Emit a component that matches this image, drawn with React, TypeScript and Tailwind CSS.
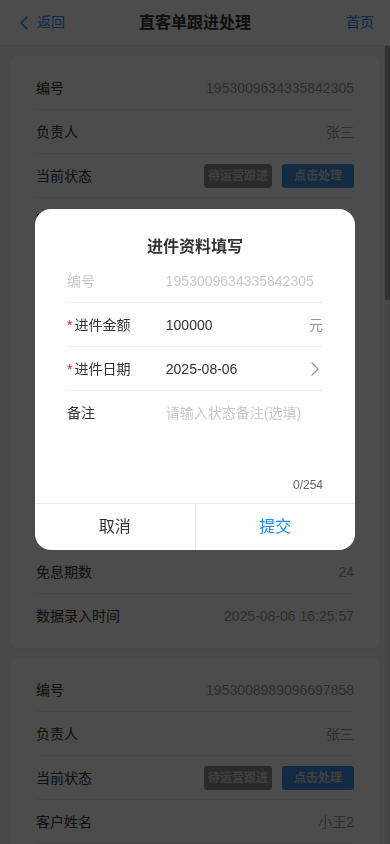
import React from "react";
import { ChevronLeft, ChevronRight } from "lucide-react";

type Row = { label: string; value?: string; status?: boolean };

const card1: Row[] = [
  { label: "编号", value: "1953009634335842305" },
  { label: "负责人", value: "张三" },
  { label: "当前状态", status: true },
  { label: "客户姓名", value: "小王1" },
  { label: "联系电话", value: "13800000000" },
  { label: "身份证号", value: "110101199001011234" },
  { label: "车辆品牌", value: "大众" },
  { label: "车辆型号", value: "朗逸" },
  { label: "车价", value: "120000" },
  { label: "贷款金额", value: "100000" },
  { label: "贷款期数", value: "36" },
  { label: "免息期数", value: "24" },
  { label: "数据录入时间", value: "2025-08-06 16:25:57" },
];

const card2: Row[] = [
  { label: "编号", value: "1953008989096697858" },
  { label: "负责人", value: "张三" },
  { label: "当前状态", status: true },
  { label: "客户姓名", value: "小王2" },
  { label: "联系电话", value: "13900000000" },
];

function Card({ rows }: { rows: Row[] }) {
  return (
    <div className="bg-white rounded-lg shadow-[0_1px_4px_rgba(0,0,0,0.06)] py-[10px] px-[10px]">
      {rows.map((r, i) => (
        <div
          key={i}
          className={
            "mx-4 h-[44px] flex items-center justify-between text-[14px] leading-6 " +
            (i < rows.length - 1 ? "border-b border-[#ebedf0]" : "")
          }
        >
          <span className="text-[#323233]">{r.label}</span>
          {r.status ? (
            <div className="flex items-center gap-[10px]">
              <span className="h-[24px] px-1 flex items-center rounded-[3px] bg-[#8e8e8e] text-[#d8d8d8] text-[12px] font-bold">
                待运营跟进
              </span>
              <span className="h-[24px] px-3 flex items-center rounded-[3px] bg-[#3d8fdc] text-[#d8d8d8] text-[12px] font-bold">
                点击处理
              </span>
            </div>
          ) : (
            <span className="text-[#969799]">{r.value}</span>
          )}
        </div>
      ))}
    </div>
  );
}

export default function App() {
  return (
    <div
      className="relative h-[844px] w-[390px] overflow-hidden bg-[#f5f5f5]"
      style={{ fontFamily: '"Liberation Sans", "Noto Sans CJK SC", sans-serif' }}
    >
      <header className="h-[46px] bg-white border-b border-[#ebedf0] grid grid-cols-[1fr_auto_1fr] items-center px-4">
        <div className="flex items-center text-[#1989fa] text-[14px]">
          <ChevronLeft size={24} strokeWidth={1.6} className="-ml-[4px] mr-[1px]" />
          <span>返回</span>
        </div>
        <div className="text-[16px] font-bold text-[#323233]">直客单跟进处理</div>
        <div className="text-right text-[#1989fa] text-[14px]">首页</div>
      </header>

      <main className="px-[10px] pt-[10px] flex flex-col gap-[10px]">
        <Card rows={card1} />
        <Card rows={card2} />
      </main>

      {/* scrollbar */}
      <div className="absolute right-0 top-[46px] bottom-0 w-[5px] bg-[#ececec]">
        <div className="h-[254px] w-full bg-[#a9a9a9]" />
      </div>

      {/* overlay */}
      <div className="fixed inset-0 bg-black/70" />

      {/* dialog */}
      <div className="fixed left-1/2 top-[209px] -translate-x-1/2 w-[320px] bg-white rounded-2xl overflow-hidden">
        <div className="pt-[26px] text-center text-[16px] leading-6 font-bold text-[#323233]">
          进件资料填写
        </div>
        <div className="mx-8 text-[14px] leading-6">
          <div className="h-[44px] flex items-center border-b border-[#ebedf0]">
            <span className="w-[86.8px] mr-3 shrink-0 text-[#c8c9cc]">编号</span>
            <span className="flex-1 text-[#c8c9cc]">1953009634335842305</span>
          </div>
          <div className="h-[44px] flex items-center border-b border-[#ebedf0]">
            <span className="w-[86.8px] mr-3 shrink-0 text-[#323233]">
              <span className="text-[#ee0a24] mr-[2px]">*</span>进件金额
            </span>
            <span className="flex-1 text-[#323233]">100000</span>
            <span className="text-[#969799] ml-1">元</span>
          </div>
          <div className="h-[44px] flex items-center border-b border-[#ebedf0]">
            <span className="w-[86.8px] mr-3 shrink-0 text-[#323233]">
              <span className="text-[#ee0a24] mr-[2px]">*</span>进件日期
            </span>
            <span className="flex-1 text-[#323233]">2025-08-06</span>
            <span className="ml-1 h-6 w-4 flex items-center justify-center text-[#969799]">
              <ChevronRight size={24} strokeWidth={1.3} className="shrink-0" />
            </span>
          </div>
          <div className="pt-[10px] pb-[10px] flex">
            <span className="w-[86.8px] mr-3 shrink-0 text-[#323233]">备注</span>
            <div className="flex-1 flex flex-col">
              <div className="h-[72px] text-[#c8c9cc]">请输入状态备注(选填)</div>
              <div className="mt-1 text-right text-[12px] leading-4 text-[#646566]">0/254</div>
            </div>
          </div>
        </div>
        <div className="flex h-[47px] border-t border-[#ebedf0] text-[16px]">
          <button className="flex-1 flex items-center justify-center text-[#323233]">取消</button>
          <button className="flex-1 flex items-center justify-center text-[#1989fa] border-l border-[#ebedf0]">
            提交
          </button>
        </div>
      </div>
    </div>
  );
}
